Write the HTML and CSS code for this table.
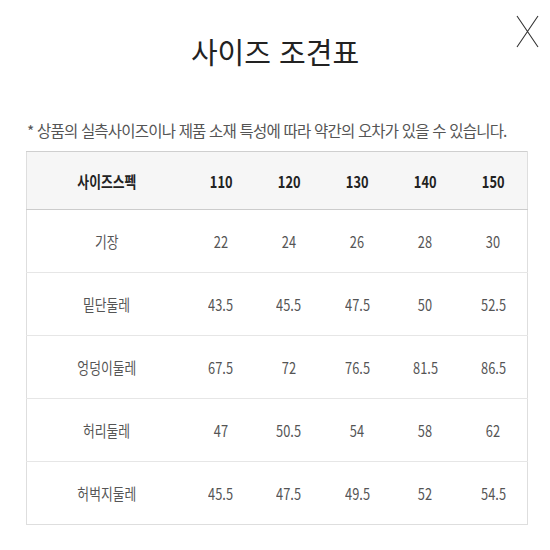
FILE: index.html
```html
<!DOCTYPE html>
<html lang="ko">
<head>
<meta charset="utf-8">
<title>사이즈 조견표</title>
<link rel="stylesheet" href="styles.css">
</head>
<body>
<div class="popup">
  <h1 class="title">사이즈 조견표</h1>
  <button class="close" aria-label="닫기">
    <svg width="23" height="33" viewBox="0 0 23 33"><path d="M1 1 L22 32 M22 1 L1 32" stroke="#333" stroke-width="1.1" fill="none"/></svg>
  </button>
  <p class="note">* 상품의 실측사이즈이나 제품 소재 특성에 따라 약간의 오차가 있을 수 있습니다.</p>
  <table class="size-table">
    <colgroup><col class="c-label"><col class="c-num"><col class="c-num"><col class="c-num"><col class="c-num"><col class="c-num"></colgroup>
    <thead>
      <tr><th><span class="sq">사이즈스펙</span></th><th><span class="sq">110</span></th><th><span class="sq">120</span></th><th><span class="sq">130</span></th><th><span class="sq">140</span></th><th><span class="sq">150</span></th></tr>
    </thead>
    <tbody>
      <tr><td><span class="sq">기장</span></td><td><span class="sq">22</span></td><td><span class="sq">24</span></td><td><span class="sq">26</span></td><td><span class="sq">28</span></td><td><span class="sq">30</span></td></tr>
      <tr><td><span class="sq">밑단둘레</span></td><td><span class="sq">43.5</span></td><td><span class="sq">45.5</span></td><td><span class="sq">47.5</span></td><td><span class="sq">50</span></td><td><span class="sq">52.5</span></td></tr>
      <tr><td><span class="sq">엉덩이둘레</span></td><td><span class="sq">67.5</span></td><td><span class="sq">72</span></td><td><span class="sq">76.5</span></td><td><span class="sq">81.5</span></td><td><span class="sq">86.5</span></td></tr>
      <tr><td><span class="sq">허리둘레</span></td><td><span class="sq">47</span></td><td><span class="sq">50.5</span></td><td><span class="sq">54</span></td><td><span class="sq">58</span></td><td><span class="sq">62</span></td></tr>
      <tr><td><span class="sq">허벅지둘레</span></td><td><span class="sq">45.5</span></td><td><span class="sq">47.5</span></td><td><span class="sq">49.5</span></td><td><span class="sq">52</span></td><td><span class="sq">54.5</span></td></tr>
    </tbody>
  </table>
</div>
</body>
</html>
```
FILE: styles.css
```css
html, body {
  margin: 0;
  padding: 0;
  background: #fff;
}
body {
  font-family: "Noto Sans CJK KR", "Noto Sans", sans-serif;
  color: #333;
}
.popup {
  position: relative;
  width: 550px;
  padding-left: 26px;
  box-sizing: border-box;
}
.title {
  margin: 0;
  padding-top: 37px;
  padding-right: 26px;
  text-align: center;
  font-size: 29px;
  line-height: 29px;
  font-weight: 400;
  color: #222;
}
.close {
  position: absolute;
  top: 15px;
  right: 11px;
  padding: 0;
  border: 0;
  background: none;
  line-height: 0;
}
.note {
  margin: 56px 0 0 1px;
  font-size: 15.5px;
  line-height: 16px;
  letter-spacing: -0.8px;
  color: #555;
  white-space: nowrap;
}
.sq {
  display: inline-block;
  transform: scaleX(0.8);
}
.size-table {
  margin-top: 13px;
  width: 502px;
  border-collapse: collapse;
  table-layout: fixed;
  border: 1px solid #dedede;
  border-top-color: #cfcfcf;
}
.c-label { width: 160px; }
.c-num { width: 68px; }
.size-table th {
  height: 57px;
  padding: 0;
  background: #f6f6f6;
  border-bottom: 1px solid #cccccc;
  font-size: 16px;
  font-weight: 700;
  color: #222;
  text-align: center;
  vertical-align: middle;
}
.size-table td {
  height: 62px;
  padding: 0;
  border-bottom: 1px solid #e6e6e6;
  font-size: 16px;
  font-weight: 400;
  color: #555;
  text-align: center;
  vertical-align: middle;
}
.size-table tbody tr:last-child td {
  border-bottom-color: #dedede;
}
```
